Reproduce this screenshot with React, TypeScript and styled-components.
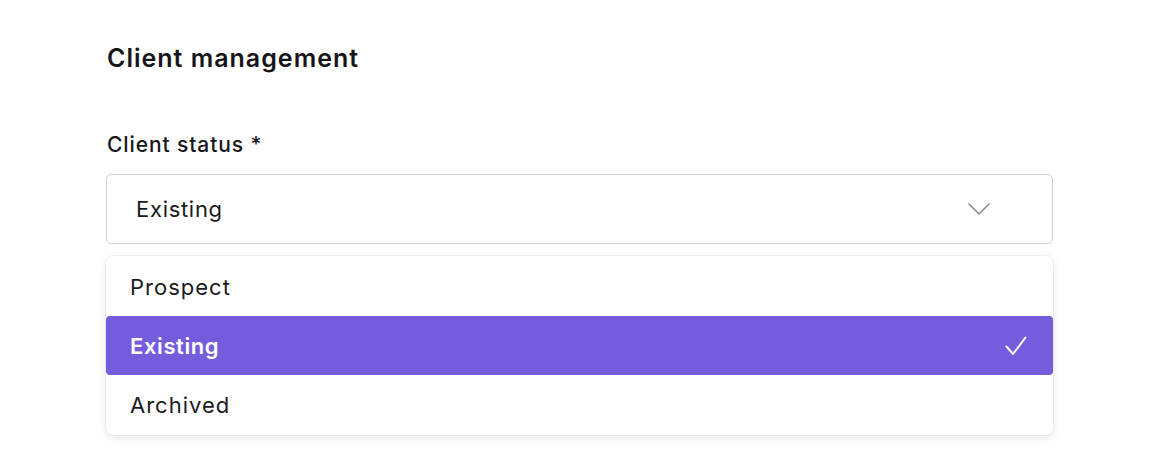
import React from "react";
import styled, { createGlobalStyle } from "styled-components";

const Global = createGlobalStyle`
  html, body { margin: 0; padding: 0; background: #ffffff; }
  body { font-family: "Inter", "Liberation Sans", sans-serif; color: #16161a; -webkit-font-smoothing: antialiased; }
`;

const Page = styled.div`
  width: 1154px;
  height: 464px;
  box-sizing: border-box;
  padding: 40px 0 0 106px;
`;

const Form = styled.div`
  width: 947px;
  display: flex;
  flex-direction: column;
`;

const Title = styled.h2`
  margin: 0;
  font-size: 25px;
  line-height: 36px;
  font-weight: 600;
  letter-spacing: 1px;
  padding-left: 1px;
`;

const Label = styled.label`
  margin-top: 56px;
  font-size: 21px;
  line-height: 26px;
  font-weight: 500;
  letter-spacing: 0.9px;
  padding-left: 1px;
`;

const Trigger = styled.button`
  margin-top: 16px;
  height: 70px;
  box-sizing: border-box;
  border: 1.5px solid #d3d3d6;
  border-radius: 5px;
  background: #fff;
  display: flex;
  align-items: center;
  justify-content: space-between;
  padding: 0 62px 0 29px;
  font-family: inherit;
  font-size: 22px;
  color: #1a1a1e;
  letter-spacing: 0.7px;
  cursor: pointer;
`;

const Menu = styled.ul`
  list-style: none;
  margin: 12px 0 0 0;
  padding: 1px 0;
  border-radius: 7px;
  background: #fff;
  box-shadow: 0 0 0 1px rgba(0, 0, 0, 0.04), 0 3px 10px rgba(0, 0, 0, 0.1);
  display: flex;
  flex-direction: column;
`;

const Option = styled.li<{ $selected?: boolean }>`
  height: 59px;
  display: flex;
  align-items: center;
  justify-content: space-between;
  padding: 0 26px 0 24px;
  border-radius: 4px;
  font-size: 22px;
  letter-spacing: ${(p) => (p.$selected ? "0.6px" : "1px")};
  background: ${(p) => (p.$selected ? "#745cdd" : "transparent")};
  color: ${(p) => (p.$selected ? "#ffffff" : "#1a1a1e")};
  font-weight: ${(p) => (p.$selected ? 600 : 400)};
`;

const Chevron = () => (
  <svg width="22" height="12" viewBox="0 0 22 12" fill="none">
    <path d="M1 1l10 10L21 1" stroke="#8a8a90" strokeWidth="1.5" strokeLinecap="round" strokeLinejoin="round" />
  </svg>
);

const Check = () => (
  <svg width="22" height="20" viewBox="0 0 22 20" fill="none">
    <path d="M1.5 10.5l6.5 7.5L20.5 1.5" stroke="#ffffff" strokeWidth="2" strokeLinecap="round" strokeLinejoin="round" />
  </svg>
);

const options = ["Prospect", "Existing", "Archived"];

export default function App() {
  const selected = "Existing";
  return (
    <>
      <Global />
      <Page>
        <Form>
          <Title>Client management</Title>
          <Label>Client status *</Label>
          <Trigger>
            <span>{selected}</span>
            <Chevron />
          </Trigger>
          <Menu>
            {options.map((o) => (
              <Option key={o} $selected={o === selected}>
                <span>{o}</span>
                {o === selected && <Check />}
              </Option>
            ))}
          </Menu>
        </Form>
      </Page>
    </>
  );
}
